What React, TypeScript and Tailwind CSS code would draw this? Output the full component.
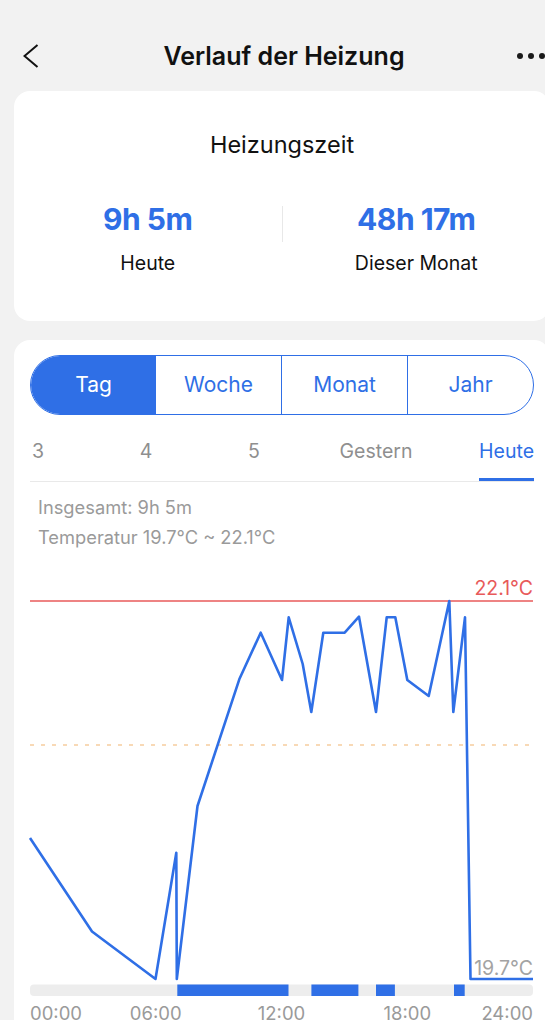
import React from 'react';

const line: [number, number][] = [
  [30, 838], [92, 931.5], [155.5, 979], [176.3, 852.7], [176.8, 979], [197.5, 806],
  [239.3, 679.3], [260.7, 632.7], [282, 680], [288.7, 617.3], [302.7, 664], [311.3, 712],
  [323.3, 632.7], [344.7, 632.7], [359, 616.7], [376, 712], [386.7, 617.3], [395.3, 617.3],
  [407.3, 680], [428.7, 696], [449.3, 601], [453.3, 712], [465, 617.3], [470.5, 979], [533, 979],
];

// heating periods, page x coords
const heating: [number, number][] = [
  [177.3, 288.5], [311.4, 358.4], [376, 394.9], [454, 464.7],
];

const tabs = ['3', '4', '5', 'Gestern', 'Heute'];

function Chart() {
  const pts = line.map(([x, y]) => `${x - 30},${y - 570}`).join(' ');
  return (
    <svg width="503" height="430" viewBox="0 0 503 430" className="mt-[18px] block overflow-visible">
      <text x="503" y="25" textAnchor="end" fontSize="19.5" fill="#e85a5a" fontFamily="Inter, sans-serif">
        22.1°C
      </text>
      <line x1="0" y1="31" x2="503" y2="31" stroke="#e85a5a" strokeWidth="1.5" />
      <line x1="0" y1="175" x2="503" y2="175" stroke="#f6cd9e" strokeWidth="1.5" strokeDasharray="4 7" />
      <text x="503" y="405" textAnchor="end" fontSize="19.5" fill="#a3a3a3" fontFamily="Inter, sans-serif">
        19.7°C
      </text>
      <polyline points={pts} fill="none" stroke="#2f6fe6" strokeWidth="2.6" strokeLinejoin="round" />
      <rect x="0" y="414.5" width="503" height="11.5" rx="4" fill="#ededed" />
      {heating.map(([a, b]) => (
        <rect key={a} x={a - 30} y="414.5" width={b - a} height="11.5" fill="#2f6fe6" />
      ))}
    </svg>
  );
}

export default function App() {
  return (
    <div className="w-[545px] h-[1020px] overflow-hidden bg-[#f2f2f2]" style={{ fontFamily: 'Inter, "Noto Sans", sans-serif' }}>
      <div className="w-[564px]">
        {/* Header */}
        <div className="pt-[40px] pl-[23px] pr-[19px] h-[72px] grid grid-cols-[1fr_auto_1fr] items-center">
          <svg width="16" height="24" viewBox="0 0 16 24">
            <polyline points="14.5,1 1.5,12 14.5,23" fill="none" stroke="#111" strokeWidth="2" />
          </svg>
          <h1 className="text-[25px] leading-[32px] font-semibold text-[#111]">Verlauf der Heizung</h1>
          <div className="flex justify-end gap-[5px]">
            <span className="w-[6px] h-[6px] rounded-full bg-[#1a1a1a]" />
            <span className="w-[6px] h-[6px] rounded-full bg-[#1a1a1a]" />
            <span className="w-[6px] h-[6px] rounded-full bg-[#1a1a1a]" />
          </div>
        </div>

        {/* Summary card */}
        <div className="mx-[14px] mt-[19px] h-[230px] rounded-[16px] bg-white pt-[40px]">
          <h2 className="text-center text-[23.5px] leading-[28px] font-normal text-[#111]">Heizungszeit</h2>
          <div className="mt-[42px] flex">
            <div className="flex-1 flex flex-col items-center">
              <div className="text-[30px] leading-[36px] font-bold text-[#2f6fe6] tracking-[-0.5px]">9h 5m</div>
              <div className="mt-[14px] text-[19.5px] leading-[24px] text-[#111]">Heute</div>
            </div>
            <div className="w-px h-[36px] mt-[5px] bg-[#e8e8e8]" />
            <div className="flex-1 flex flex-col items-center">
              <div className="text-[30px] leading-[36px] font-bold text-[#2f6fe6] tracking-[-0.5px]">48h 17m</div>
              <div className="mt-[14px] text-[19.5px] leading-[24px] text-[#111]">Dieser Monat</div>
            </div>
          </div>
        </div>

        {/* History card */}
        <div className="mx-[14px] mt-[19px] rounded-t-[16px] bg-white px-[16px] pt-[15px] pb-[40px]">
          <div className="h-[60px] flex rounded-full border-[1.5px] border-[#2f6fe6] overflow-hidden text-[21px]">
            <div className="flex-1 flex items-center justify-center bg-[#2f6fe6] text-white">Tag</div>
            <div className="flex-1 flex items-center justify-center text-[#2f6fe6]">Woche</div>
            <div className="flex-1 flex items-center justify-center border-l border-[#2f6fe6] text-[#2f6fe6]">Monat</div>
            <div className="flex-1 flex items-center justify-center border-l border-[#2f6fe6] text-[#2f6fe6]">Jahr</div>
          </div>

          <div className="mt-[24px] grid grid-cols-[60px_112px_104px_140px_1fr] border-b border-[#e9e9e9] text-[19.5px] leading-[24px]">
            {tabs.map((t, i) => {
              const active = t === 'Heute';
              const align = i === 0 ? 'text-left pl-[2px]' : active ? 'text-right' : 'text-center';
              return (
                <div key={t} className={align}>
                  <span
                    className={
                      active
                        ? 'inline-block pb-[15px] border-b-[3px] border-[#2f6fe6] text-[#2f6fe6]'
                        : 'inline-block pb-[15px] border-b-[3px] border-transparent text-[#8f8f8f]'
                    }
                  >
                    {t}
                  </span>
                </div>
              );
            })}
          </div>

          <div className="mt-[10px] pl-[8px] text-[18.3px] leading-[30px] text-[#9a9a9a]">
            <div>Insgesamt: 9h 5m</div>
            <div>Temperatur 19.7°C ~ 22.1°C</div>
          </div>

          <Chart />

          <div className="mt-[2px] flex justify-between text-[18.5px] leading-[22px] text-[#9a9a9a] w-[503px]">
            <div className="w-0 flex justify-start whitespace-nowrap">00:00</div>
            <div className="w-0 flex justify-center whitespace-nowrap">06:00</div>
            <div className="w-0 flex justify-center whitespace-nowrap">12:00</div>
            <div className="w-0 flex justify-center whitespace-nowrap">18:00</div>
            <div className="w-0 flex justify-end whitespace-nowrap">24:00</div>
          </div>
        </div>
      </div>
    </div>
  );
}
